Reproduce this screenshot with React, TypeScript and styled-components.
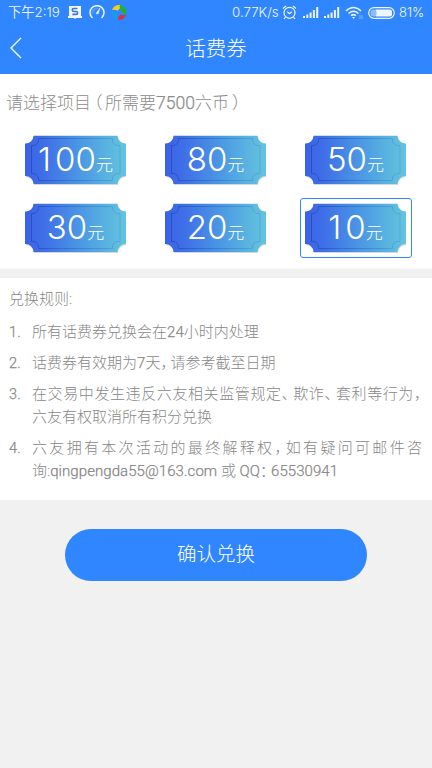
import React from "react";
import styled, { createGlobalStyle } from "styled-components";

const Global = createGlobalStyle`
  * { box-sizing: border-box; }
  body { margin: 0; background: #f1f1f1; font-family: Roboto, "Noto Sans CJK SC", sans-serif; font-weight: 300; }
  h1, h2, p, ol { margin: 0; padding: 0; font-weight: inherit; }
`;
const Screen = styled.div`
  width: 432px; height: 768px; overflow: hidden; background: #f1f1f1;
  display: flex; flex-direction: column;
`;
const Top = styled.header`
  height: 74px; flex: none; background: #3086ff; color: #fff;
`;
const StatusBar = styled.div`
  height: 25px; padding: 0 7px 0 8px; display: flex; justify-content: space-between; align-items: center;
`;
const Group = styled.div`
  display: flex; align-items: center; height: 25px;
`;
const StatusText = styled.span<{ $w: number; $size?: number }>`
  width: ${(p) => p.$w}px; font-size: ${(p) => p.$size ?? 13}px; line-height: 25px; white-space: nowrap;
  font-family: Inter, "Noto Sans CJK SC", sans-serif; font-weight: 350; color: #f0f6ff;
`;
const Icon = styled.svg<{ $ml?: number }>`
  display: block; flex: none; margin-left: ${(p) => p.$ml ?? 0}px;
`;
const NavBar = styled.div`
  height: 49px; display: grid; grid-template-columns: 32px 1fr 32px; align-items: center; padding-bottom: 3px;
`;
const Title = styled.h1`
  font-size: 20.5px; line-height: 30px; padding-top: 1px; text-align: center;
`;
const Picker = styled.section`
  height: 195px; flex: none; background: #fff; margin-bottom: 9px; border-bottom: 1px solid #f8f8f8;
`;
const Heading = styled.h2`
  height: 56px; padding-left: 6px; line-height: 55px; font-size: 17px; color: #8c8c8c; white-space: nowrap;
  font-family: "Noto Sans CJK SC", sans-serif;
`;
const Paren = styled.span`
  display: inline-block; width: 14px; padding-left: 3px; font-feature-settings: "halt";
`;
const Figures = styled.span`
  font-family: Roboto, sans-serif; font-weight: 300; font-size: 17.6px; -webkit-text-stroke: 0.25px;
`;
const Grid = styled.div`
  display: grid; grid-template-columns: repeat(3, 112px); grid-auto-rows: 60px; gap: 8px 28px; padding-left: 20px;
`;
const Option = styled.button<{ $on: boolean }>`
  display: grid; place-items: center; padding: 0; background: none; border-radius: 3px;
  border: 1.4px solid ${(p) => (p.$on ? "#3086ff" : "transparent")};
  > * { grid-area: 1 / 1; }
`;
const Value = styled.span`
  display: flex; align-items: baseline; justify-content: center; width: 102px; height: 50px; padding-right: 1px;
  color: #fff; line-height: 48px; white-space: nowrap;
`;
const Amount = styled.span<{ $one: boolean }>`
  font: 300 33px/48px Inter, sans-serif; letter-spacing: 0;
  &::first-letter { margin-right: ${(p) => (p.$one ? 4 : 0)}px; }
`;
const Unit = styled.span`
  font: 300 17px/24px "Noto Sans CJK SC", sans-serif;
`;
const Rules = styled.section`
  height: 222px; flex: none; background: #fff; padding: 10px 0 0 9px; color: #888; font-size: 15px;
`;
const RulesTitle = styled.p`
  line-height: 23px; margin-bottom: 10px; font-size: 15px;
`;
const List = styled.ol`
  list-style: none; display: flex; flex-direction: column; gap: 8px;
`;
const Item = styled.li`
  display: grid; grid-template-columns: 23px 390px; line-height: 23px;
`;
const Num = styled.span`
  font-weight: 300; font-size: 14.5px; letter-spacing: 0.3px; -webkit-text-stroke: 0.25px;
`;
const Line = styled.span<{ $full?: boolean }>`
  display: block; white-space: nowrap; text-align: justify;
  text-align-last: ${(p) => (p.$full ? "justify" : "left")};
`;
const Latin = styled.span`
  font-weight: 300; letter-spacing: 0.07px; -webkit-text-stroke: 0.25px;
`;
const Mark = styled.span<{ $w: number }>`
  display: inline-block; width: ${(p) => p.$w}px; text-align-last: left; font-feature-settings: "halt";
`;
const Confirm = styled.button`
  width: 302px; height: 52px; margin: 29px 0 0 65px; flex: none; border: 0; border-radius: 26px;
  background: #3086ff; color: #fff; font: 300 19.5px/48px "Noto Sans CJK SC", sans-serif; padding: 0 0 4px;
`;

const Signal = ({ ml }: { ml: number }) => (
  <Icon $ml={ml} width="16" height="12" viewBox="0 0 16 12" fill="#edf5ff">
    <path d="M0 9h2v2H0zM3.3 7.5h2V11h-2zM6.6 5.5h2V11h-2zM9.9 3h2v8h-2zM13.2 0h2v11h-2z" />
  </Icon>
);

const Ticket = ({ id }: { id: string }) => (
  <Icon width="102" height="50" viewBox="0 0 102 50">
    <defs>
      <linearGradient id={id}>
        <stop offset="0" stopColor="#3b62e5" />
        <stop offset=".2" stopColor="#3f70e8" />
        <stop offset=".55" stopColor="#4b98e4" />
        <stop offset=".88" stopColor="#5dbade" />
        <stop offset="1" stopColor="#62c4e0" />
      </linearGradient>
      <linearGradient id={id + "l"}>
        <stop offset="0" stopColor="#2549b5" />
        <stop offset=".55" stopColor="#337bc9" />
        <stop offset="1" stopColor="#559fe0" />
      </linearGradient>
    </defs>
    <path d="M9 1.500H93A8 8 0 0 0 101 9V42A8 8 0 0 0 93 50H9A8 8 0 0 0 1 42V9A8 8 0 0 0 9 1.500Z" fill="#c5d0d8" opacity=".8" />
    <path d="M8.500 .7H92.500A8 8 0 0 0 101 8.500V41A8 8 0 0 0 92.500 49H8.500A8 8 0 0 0 0 41V8.500A8 8 0 0 0 8.500 .7Z" fill={`url(#${id})`} />
    <path d="M13.500 3.500H87.500V5A6 6 0 0 0 93 10.500H95V38.500H93A6 6 0 0 0 87.500 44V45.500H13.500V44A6 6 0 0 0 8.500 38.500H6.500V10.500H8.500A6 6 0 0 0 13.500 5Z" fill="none" stroke={`url(#${id}l)`} strokeWidth=".8" />
  </Icon>
);

const amounts = [100, 80, 50, 30, 20, 10];

export default function App() {
  return (
    <Screen>
      <Global />
      <Top>
        <StatusBar>
          <Group>
            <StatusText $w={60} $size={13.3}>下午2:19</StatusText>
            <Icon width="14" height="13" viewBox="0 0 14 13">
              <path d="M1 0h12v10h1v2H8l-1 1-1-1H0v-2h1z" fill="#f2f7ff" />
              <path d="M9.500 2.500H5.500Q4.300 2.500 4.300 4T6 5.500h2q1.600 0 1.600 1.400T8 8.300H4.300" fill="none" stroke="#3b79d8" strokeWidth="1.7" />
            </Icon>
            <Icon $ml={7} width="16" height="15" viewBox="0 0 16 15" fill="none" stroke="#eef5ff">
              <path d="M3.500 13A7 7 0 1 1 12.500 13" strokeWidth="1.5" />
              <path d="M3.300 9A5 5 0 0 1 8.500 3.300" stroke="#5b9dff" strokeWidth="1.8" />
              <path d="M7 8.500L11 3L9 9Z" fill="#fff" strokeWidth=".5" />
            </Icon>
            <Icon $ml={6} width="16" height="17" viewBox="0 0 16 17">
              <path d="M1 6Q3 .5 9.500 1L10 3L6.500 6.800Q4 5 1 6Z" fill="#f5cf20" />
              <path d="M9 1Q16 2.500 15.200 11L10.500 8Q11 5 8.500 3Z" fill="#20b51e" />
              <path d="M15 10.500Q13 16.500 6 16L6.500 14L9.500 10.500Q12 12 15 10.500Z" fill="#e32c34" />
              <path d="M7 16Q0 14 .8 6L5.500 9Q5 12 7.500 14Z" fill="#139ee8" />
            </Icon>
          </Group>
          <Group>
            <StatusText $w={50} $size={13.3}>0.77K/s</StatusText>
            <Icon width="15" height="15" viewBox="0 0 15 15" fill="none" stroke="#edf5ff" strokeWidth="1.2">
              <circle cx="7.500" cy="7.800" r="5.500" />
              <path d="M1 3.500L4 1M14 3.500L11 1M3.500 12L2 14M11.500 12L13 14M5.200 6.800L7.500 8.800L9.800 6.800" />
            </Icon>
            <Signal ml={6} />
            <Signal ml={5} />
            <Icon $ml={5} width="18" height="14" viewBox="0 0 18 14" fill="none" stroke="#edf5ff" strokeWidth="1.5">
              <path d="M1 5Q8.500-2 16 5M3.500 7.500Q8.500 3 13.500 7.500M6 9.800Q8.500 7.500 11 9.800" />
              <path d="M7 11L8.500 13L10 11Z" fill="#edf5ff" stroke="none" />
              <path d="M15 9v4M17 9v4" stroke="#9ac3ff" strokeWidth=".8" />
            </Icon>
            <Icon $ml={5} width="27" height="12" viewBox="0 0 27 12">
              <rect x=".7" y=".7" width="25.600" height="10.600" rx="5.300" fill="none" stroke="#edf5ff" strokeWidth="1.2" />
              <rect x="6" y="2.500" width="18" height="7" rx="2.500" fill="#f0f6ff" />
              <rect x="2.500" y="2.500" width="6" height="7" rx="3" fill="#8fbcff" />
            </Icon>
            <Icon as="span" $ml={4} />
            <StatusText $w={26} $size={13}>81%</StatusText>
          </Group>
        </StatusBar>
        <NavBar>
          <Icon $ml={10} width="12" height="22" viewBox="0 0 12 22" fill="none" stroke="#fff" strokeWidth="1.4">
            <path d="M11 1L1 11L11 21" />
          </Icon>
          <Title>话费券</Title>
        </NavBar>
      </Top>
      <Picker>
        <Heading>
          请选择项目<Paren>（</Paren>所需要<Figures>7500</Figures>六币<Paren>）</Paren>
        </Heading>
        <Grid>
          {amounts.map((a) => (
            <Option key={a} $on={a === 10}>
              <Ticket id={`ticket${a}`} />
              <Value>
                <Amount $one={String(a).startsWith("1")}>{a}</Amount>
                <Unit>元</Unit>
              </Value>
            </Option>
          ))}
        </Grid>
      </Picker>
      <Rules>
        <RulesTitle>兑换规则:</RulesTitle>
        <List>
          <Item>
            <Num>1.</Num>
            <Line>所有话费券兑换会在<Latin>24</Latin>小时内处理</Line>
          </Item>
          <Item>
            <Num>2.</Num>
            <Line>话费券有效期为<Latin>7</Latin>天<Mark $w={10}>，</Mark>请参考截至日期</Line>
          </Item>
          <Item>
            <Num>3.</Num>
            <div>
              <Line $full>在交易中发生违反六友相关监管规定<Mark $w={11}>、</Mark>欺诈<Mark $w={11}>、</Mark>套利等行为<Mark $w={8}>，</Mark></Line>
              <Line>六友有权取消所有积分兑换</Line>
            </div>
          </Item>
          <Item>
            <Num>4.</Num>
            <div>
              <Line $full>六友拥有本次活动的最终解释权<Mark $w={9}>，</Mark>如有疑问可邮件咨</Line>
              <Line>询:<Latin>qingpengda55@163.com</Latin> 或 <Latin>QQ</Latin><Mark $w={11}>：</Mark><Latin>65530941</Latin></Line>
            </div>
          </Item>
        </List>
      </Rules>
      <Confirm>确认兑换</Confirm>
    </Screen>
  );
}
